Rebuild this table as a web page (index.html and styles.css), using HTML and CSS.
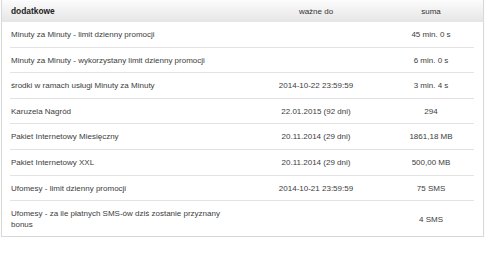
FILE: index.html
```html
<!DOCTYPE html>
<html lang="pl">
<head>
<meta charset="utf-8">
<link rel="stylesheet" href="styles.css">
</head>
<body>
<div class="panel">
  <div class="row head">
    <div class="c1">dodatkowe</div>
    <div class="c2">ważne do</div>
    <div class="c3">suma</div>
  </div>
  <div class="body">
    <div class="row">
      <div class="c1">Minuty za Minuty - limit dzienny promocji</div>
      <div class="c2"></div>
      <div class="c3">45 min. 0 s</div>
    </div>
    <div class="row">
      <div class="c1">Minuty za Minuty - wykorzystany limit dzienny promocji</div>
      <div class="c2"></div>
      <div class="c3">6 min. 0 s</div>
    </div>
    <div class="row">
      <div class="c1">środki w ramach usługi Minuty za Minuty</div>
      <div class="c2">2014-10-22 23:59:59</div>
      <div class="c3">3 min. 4 s</div>
    </div>
    <div class="row">
      <div class="c1">Karuzela Nagród</div>
      <div class="c2">22.01.2015 (92 dni)</div>
      <div class="c3">294</div>
    </div>
    <div class="row">
      <div class="c1">Pakiet Internetowy Miesięczny</div>
      <div class="c2">20.11.2014 (29 dni)</div>
      <div class="c3">1861,18 MB</div>
    </div>
    <div class="row">
      <div class="c1">Pakiet Internetowy XXL</div>
      <div class="c2">20.11.2014 (29 dni)</div>
      <div class="c3">500,00 MB</div>
    </div>
    <div class="row">
      <div class="c1">Ufomesy - limit dzienny promocji</div>
      <div class="c2">2014-10-21 23:59:59</div>
      <div class="c3">75 SMS</div>
    </div>
    <div class="row last">
      <div class="c1">Ufomesy - za ile płatnych SMS-ów dziś zostanie przyznany bonus</div>
      <div class="c2"></div>
      <div class="c3">4 SMS</div>
    </div>
  </div>
</div>
</body>
</html>
```
FILE: styles.css
```css
html, body {
  margin: 0;
  padding: 0;
  background: #ffffff;
}
body {
  font-family: "Liberation Sans", Arial, sans-serif;
  font-size: 8px;
  line-height: 11px;
  color: #3c3c3c;
}
.panel {
  width: 483px;
  margin-left: 1px;
  box-sizing: border-box;
  border: 1px solid #d8d8d8;
  border-top: none;
  box-shadow: 0 1px 1px rgba(0,0,0,0.06);
}
.row {
  display: grid;
  grid-template-columns: 233px 146px 84px;
  align-items: center;
}
.head {
  padding: 6px 9px 5px 8px;
  background: linear-gradient(#fcfcfc, #e5e5e5);
  color: #333;
}
.head .c1 {
  font-weight: bold;
  color: #222;
  font-size: 8.4px;
}
.body {
  padding: 0 9px 0 8px;
}
.body .row {
  padding: 7px 0 6.6px;
  border-bottom: 1px solid #e2e2e2;
}
.body .row.last {
  border-bottom: none;
  padding: 7px 0 6px;
}
.c1 {
  padding: 0 10px 0 1px;
}
.c2, .c3 {
  text-align: center;
}
```
